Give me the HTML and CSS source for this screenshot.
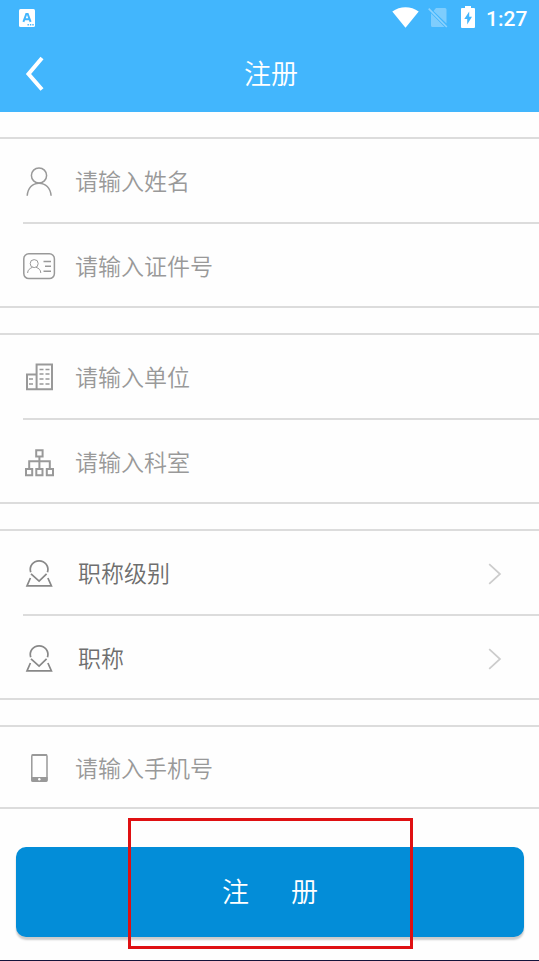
FILE: index.html
```
<!DOCTYPE html>
<html lang="zh-CN">
<head>
    <meta charset="UTF-8">
    <meta name="viewport" content="width=device-width, initial-scale=1.0">
    <title>注册</title>
    <link rel="stylesheet" href="styles.css">
</head>
<body>
    <header class="header">
        <div class="status-bar">
            <svg class="status-app" width="16" height="18" viewBox="0 0 16 18">
                <rect width="16" height="18" rx="1.5" fill="#fff"/>
                <path d="M4.4 12.8 L7.3 5 H8.7 L11.6 12.8 M5.6 10.3 H10.4" fill="none" stroke="#42b6fd" stroke-width="2"/>
                <path d="M8.5 15.7 H15" stroke="#42b6fd" stroke-width="1.4" stroke-dasharray="1.4 1"/>
            </svg>
            <svg class="status-wifi" width="27" height="21" viewBox="0 0 27 21">
                <path d="M0.3 4.6 C8 -1.3 19 -1.3 26.7 4.6 L13.5 20.8 Z" fill="#fff"/>
            </svg>
            <svg class="status-sim" width="20" height="21" viewBox="0 0 20 21">
                <path d="M8 1 H17 Q18.5 1 18.5 2.5 V16.5 L5.5 4 Z M3 6.3 L16.5 20 H4.5 Q3 20 3 18.5 Z" fill="#fff" opacity="0.32"/>
                <path d="M0.7 1.6 L18.8 20" stroke="#fff" stroke-width="1.6" opacity="0.4"/>
            </svg>
            <svg class="status-battery" width="14" height="22" viewBox="0 0 14 22">
                <path d="M4 0 H10 V2 H13 Q14 2 14 3 V21 Q14 22 13 22 H1 Q0 22 0 21 V3 Q0 2 1 2 H4 Z" fill="#fff"/>
                <path d="M8.2 5.5 L3.3 13 H6.2 V18.5 L11 10.8 H8.2 Z" fill="#42b6fd"/>
            </svg>
            <span class="status-time">1:27</span>
        </div>
        <div class="title-bar">
            <svg class="back" width="20" height="36" viewBox="0 0 20 36">
                <path d="M17 2 L3.5 18 L17 33.5" fill="none" stroke="#fff" stroke-width="4"/>
            </svg>
            <h1 class="title">注册</h1>
        </div>
    </header>

    <form class="form">
        <div class="group">
            <label class="row">
                <svg class="icon" viewBox="0 0 36 36">
                    <circle cx="18" cy="12.5" r="7.6"/>
                    <path d="M6.2 32.8 C6.8 25 11.5 20.2 18 20.2 S29.5 25 30.1 32.8"/>
                </svg>
                <input class="field" type="text" placeholder="请输入姓名">
            </label>
            <label class="row">
                <svg class="icon" viewBox="0 0 36 36">
                    <rect x="2.8" y="5.8" width="30.6" height="24.8" rx="5"/>
                    <g class="thin">
                        <circle cx="13.2" cy="15.6" r="4"/>
                        <path d="M6.6 25 C6.8 21.5 8.8 20.8 11.5 19.2 M15 19.2 C18 20.6 19.6 21.5 19.8 25"/>
                    </g>
                    <path d="M22.5 13.5 H30 M24 18.2 H30 M22.5 23.3 H30"/>
                </svg>
                <input class="field" type="text" placeholder="请输入证件号">
            </label>
        </div>

        <div class="group">
            <label class="row">
                <svg class="icon bold" viewBox="0 0 36 36">
                    <path d="M15.6 30.2 V5.4 H31 V30.2 H6 V15.6 H15.6"/>
                    <path class="dashes" d="M18.5 10.5 H28.5 M18.5 15 H28.5 M18.5 20 H28.5 M18.5 25 H28.5 M8 20 H13.5 M8 25 H13.5"/>
                </svg>
                <input class="field" type="text" placeholder="请输入单位">
            </label>
            <label class="row">
                <svg class="icon bold" viewBox="0 0 36 36">
                    <path d="M15.2 6.2 H21.6 V12.4 H15.2 Z M18.4 12.4 V25 M8.2 25 V17.2 H28.8 V25"/>
                    <path d="M5 25 H11.2 V31.2 H5 Z M15.3 25 H21.5 V31.2 H15.3 Z M25.8 25 H32 V31.2 H25.8 Z"/>
                </svg>
                <input class="field" type="text" placeholder="请输入科室">
            </label>
        </div>

        <div class="group">
            <div class="row">
                <svg class="icon dark" viewBox="0 0 36 36">
                    <path d="M9.7 17.2 A8.8 8.8 0 1 1 26.5 17.2 M10 18.8 L18.1 26.2 L25.6 18.8"/>
                    <path d="M9.4 23 L6 30.8 H30.4 L26.9 23"/>
                </svg>
                <span class="select">职称级别</span>
                <svg class="arrow" width="14" height="22" viewBox="0 0 14 22">
                    <path d="M1.2 1.2 L12 11 L1.2 20.8"/>
                </svg>
            </div>
            <div class="row">
                <svg class="icon dark" viewBox="0 0 36 36">
                    <path d="M9.7 17.2 A8.8 8.8 0 1 1 26.5 17.2 M10 18.8 L18.1 26.2 L25.6 18.8"/>
                    <path d="M9.4 23 L6 30.8 H30.4 L26.9 23"/>
                </svg>
                <span class="select">职称</span>
                <svg class="arrow" width="14" height="22" viewBox="0 0 14 22">
                    <path d="M1.2 1.2 L12 11 L1.2 20.8"/>
                </svg>
            </div>
        </div>

        <div class="group phone">
            <label class="row">
                <svg class="icon" viewBox="0 0 36 36">
                    <rect x="10.8" y="4.8" width="15.2" height="26.4" rx="1.5"/>
                    <path class="solid" d="M10.2 27 H26.6 V30.5 Q26.6 31.8 25.4 31.8 H11.4 Q10.2 31.8 10.2 30.5 Z M10.8 4.3 H26 V6 H10.8 Z"/>
                    <circle cx="18.3" cy="29.3" r="1.2" fill="#fff" stroke="none"/>
                </svg>
                <input class="field" type="tel" placeholder="请输入手机号">
            </label>
        </div>

        <div class="submit-wrap">
            <button class="submit" type="button"><span>注</span><span>册</span></button>
            <div class="highlight"></div>
        </div>
    </form>
</body>
</html>
```
FILE: styles.css
```
* {
    box-sizing: border-box;
}

body {
    display: flex;
    flex-direction: column;
    height: 961px;
    margin: 0;
    background-color: #fefefe;
    border-bottom: 1px solid #14143c;
    font-family: "Noto Sans CJK SC", sans-serif;
    font-weight: 350;
    overflow: hidden;
}

.header {
    height: 112px;
    background-color: #42b6fd;
    color: #fff;
}

.status-bar {
    display: flex;
    align-items: flex-start;
    height: 36px;
    padding: 6px 11px 0 19px;
}

.status-app {
    margin-top: 3px;
}

.status-wifi {
    margin-left: auto;
    margin-top: 1px;
}

.status-sim {
    margin: 1px 13px 0 9px;
}

.status-time {
    margin-left: 11px;
    font-family: Roboto, sans-serif;
    font-size: 21px;
    font-weight: 500;
    line-height: 26px;
    width: 42px;
}

.title-bar {
    display: grid;
    grid-template-columns: 40px 1fr 40px;
    align-items: center;
    height: 76px;
    padding: 0 22px 0 25px;
}

.title {
    margin: 0;
    padding-bottom: 4px;
    font-size: 27px;
    font-weight: 350;
    text-align: center;
}

.group {
    margin-top: 25px;
    border-top: 2px solid #dcdcdc;
    border-bottom: 2px solid #dcdcdc;
}

.row {
    display: flex;
    height: 83px;
    margin-left: 23px;
    padding: 24px 37px 0 0;
}

.row + .row {
    height: 84px;
    border-top: 2px solid #dcdcdc;
}

.phone .row {
    height: 80px;
    padding-top: 23px;
}

.icon {
    flex: none;
    width: 36px;
    height: 36px;
    margin-left: -2px;
    fill: none;
    stroke: #999;
    stroke-width: 1.5;
}

.icon.bold {
    stroke-width: 2;
}

.icon.dark {
    stroke: #888;
    stroke-width: 1.7;
}

.icon .thin {
    stroke-width: 1;
}

.icon .dashes {
    stroke-width: 1.4;
    stroke-dasharray: 4 2;
}

.icon .solid {
    fill: #999;
    stroke: none;
}

.field {
    flex: 1;
    min-width: 0;
    height: 34px;
    margin-left: 18px;
    padding: 0;
    border: none;
    outline: none;
    background: none;
    color: #555;
    font-family: inherit;
    font-size: 23px;
    font-weight: inherit;
}

.field::placeholder {
    color: #999;
}

.select {
    flex: 1;
    margin-left: 21px;
    color: #6e6e6e;
    font-size: 23px;
    line-height: 35px;
}

.arrow {
    margin-top: 8px;
    fill: none;
    stroke: #ccc;
    stroke-width: 1.7;
}

.submit-wrap {
    position: relative;
    padding: 38px 15px 0 16px;
}

.submit {
    display: flex;
    justify-content: center;
    align-items: center;
    gap: 42px;
    width: 100%;
    height: 90px;
    padding: 0 0 3px;
    border: none;
    border-radius: 10px;
    background-color: #038dd8;
    box-shadow: 0 3px 2px rgba(0, 0, 0, 0.2);
    color: #fff;
    font-family: inherit;
    font-size: 27px;
    font-weight: inherit;
}

/* red frame laid over the button */
.highlight {
    position: absolute;
    top: 9px;
    left: 128px;
    width: 285px;
    height: 131px;
    border: 3px solid #df1012;
    pointer-events: none;
}
```
